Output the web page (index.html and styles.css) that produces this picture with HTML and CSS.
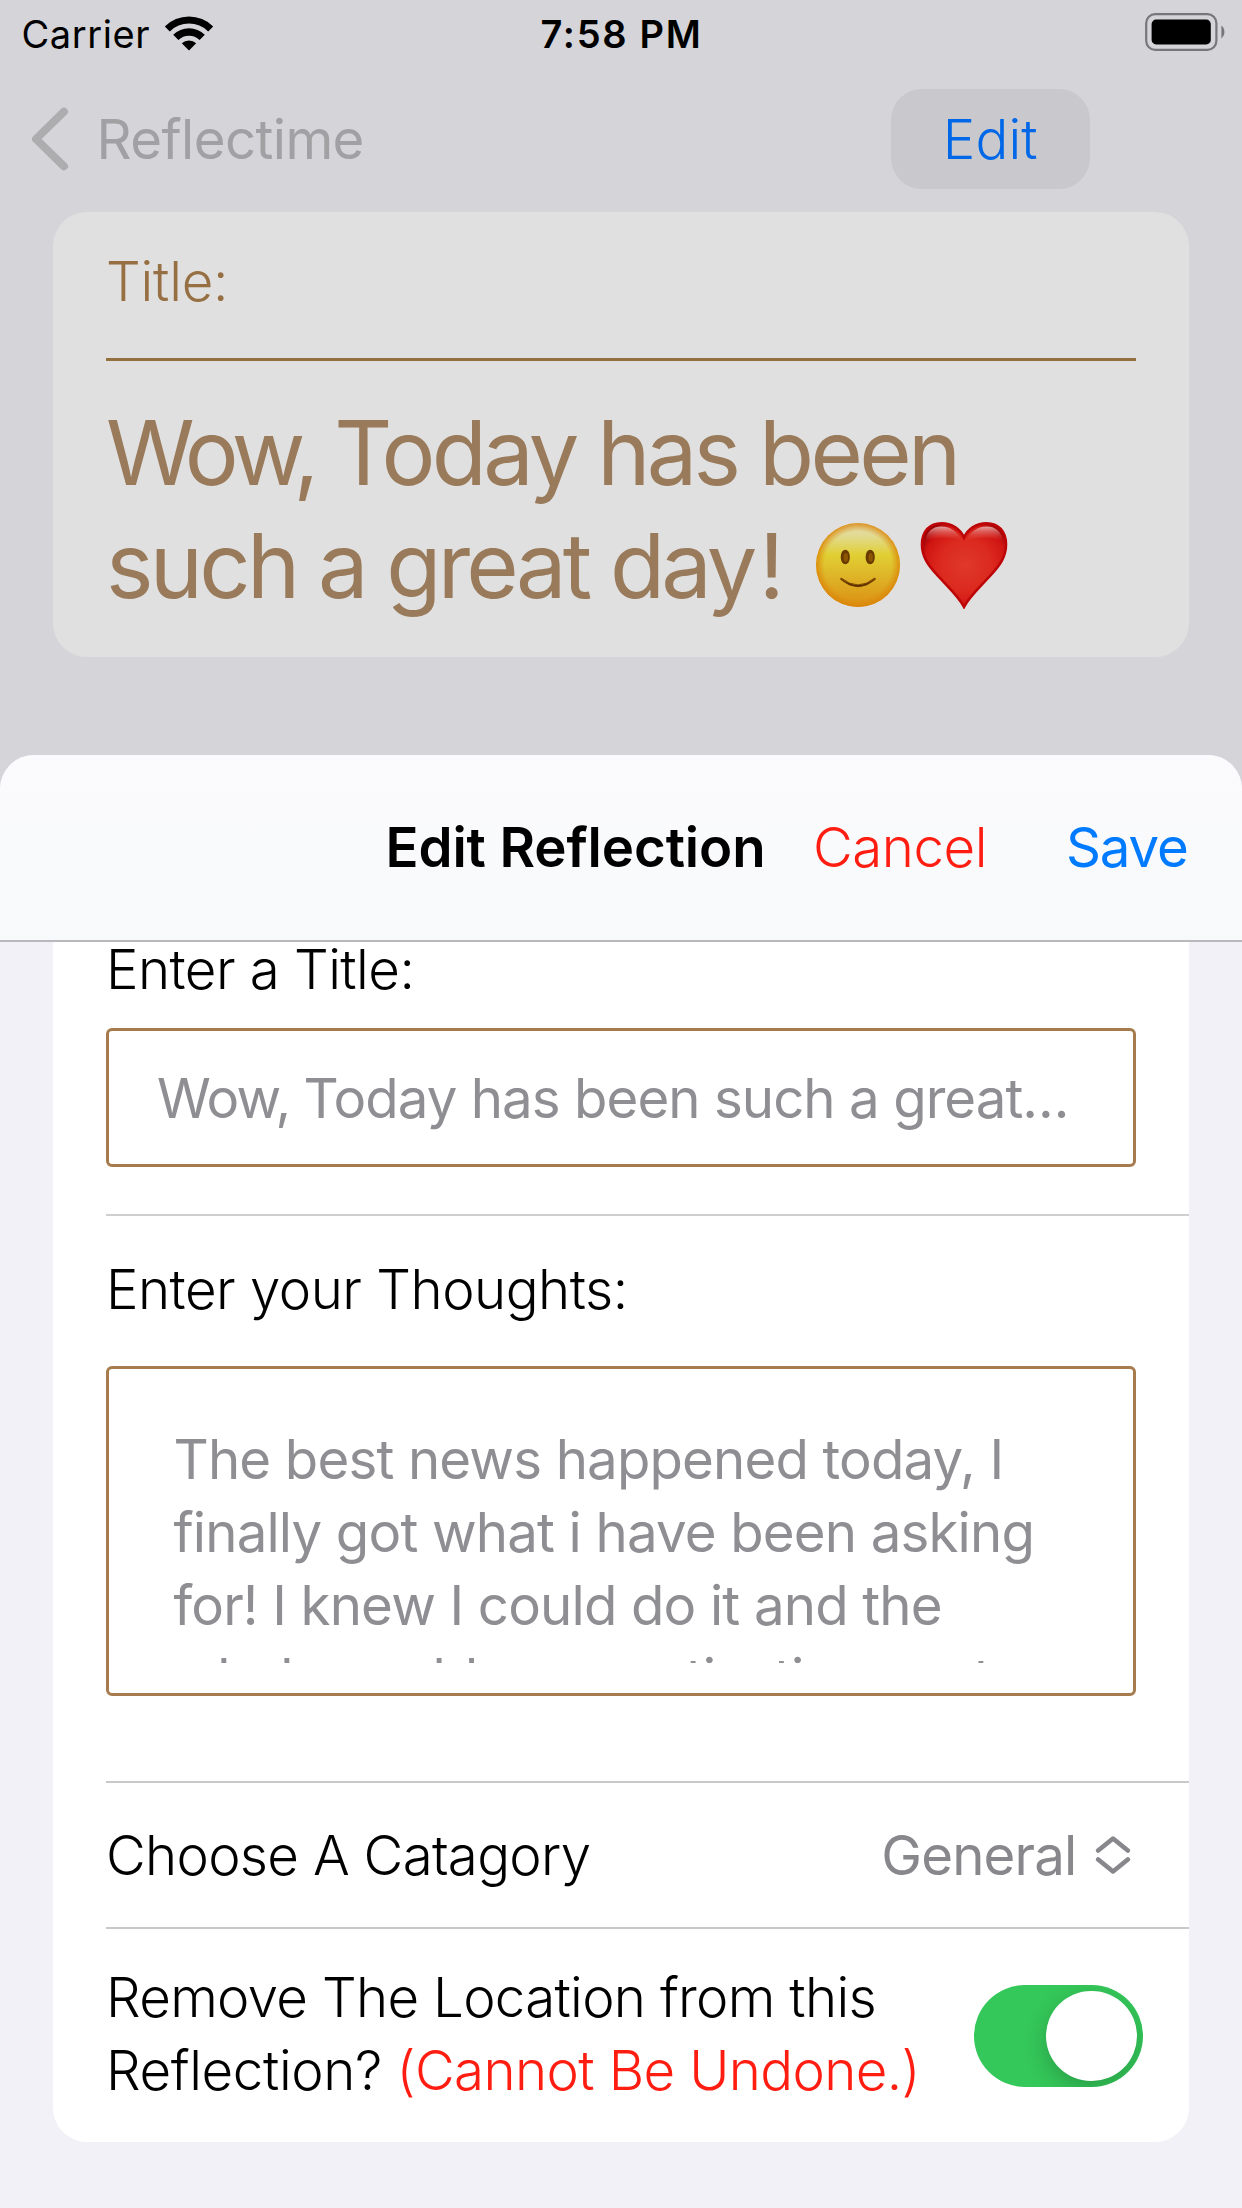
FILE: index.html
```html
<!DOCTYPE html>
<html lang="en">
<head>
<meta charset="utf-8">
<title>Reflectime</title>
<link rel="stylesheet" href="styles.css">
</head>
<body>
<section class="backdrop">
  <div class="status">
    <div class="status-left">
      <span class="carrier">Carrier</span>
      <svg class="wifi" width="50" height="38" viewBox="0 0 50 38">
        <path d="M0.8 12.4 A34.5 34.5 0 0 1 49.2 12.4 L44.2 17.4 A27.4 27.4 0 0 0 5.8 17.4 Z"/>
        <path d="M9.2 20.8 A22.6 22.6 0 0 1 40.8 20.8 L35.6 26 A15.2 15.2 0 0 0 14.4 26 Z"/>
        <path d="M17.8 29.3 A10.4 10.4 0 0 1 32.2 29.3 L25 36.6 Z"/>
      </svg>
    </div>
    <span class="clock">7:58 PM</span>
    <svg class="battery" width="80" height="38" viewBox="0 0 80 38">
      <rect x="1.2" y="1.2" width="70.2" height="35.6" rx="9" fill="none" stroke="#77767a" stroke-width="2.2"/>
      <rect x="6.6" y="6.6" width="59.2" height="24.8" rx="4.5" fill="#000"/>
      <path d="M76.4 12.6 Q79.4 15 79.4 19 Q79.4 23 76.4 25.4 Z" fill="#77767a"/>
    </svg>
  </div>
  <nav class="nav">
    <div class="back">
      <svg class="back-icon" width="38" height="64" viewBox="0 0 38 64"><path d="M33 4.7 L5 32 L33 59.3"/></svg>
      <span class="back-label">Reflectime</span>
    </div>
    <button class="edit">Edit</button>
  </nav>
  <article class="card">
    <div class="card-label">Title:</div>
    <h1 class="headline">
      <span class="line line-1"><span class="tight">Wow, </span>Today has been</span>
      <span class="line line-2">such a great day<span class="bang">!</span><svg class="smiley" width="86" height="86" viewBox="0 0 86 86">
        <defs>
          <linearGradient id="face" x1="0" y1="0" x2="0" y2="1">
            <stop offset="0" stop-color="#e2dcae"/><stop offset=".15" stop-color="#e2da92"/><stop offset=".38" stop-color="#e0cf33"/><stop offset=".62" stop-color="#deb628"/><stop offset="1" stop-color="#dc8f12"/>
          </linearGradient>
          <radialGradient id="faceEdge">
            <stop offset=".8" stop-color="#dc8a10" stop-opacity="0"/><stop offset="1" stop-color="#db8406" stop-opacity=".85"/>
          </radialGradient>
          <linearGradient id="mouth" x1="0" y1="0" x2="0" y2="1"><stop offset="0" stop-color="#8a5200"/><stop offset="1" stop-color="#4a2400"/></linearGradient>
        </defs>
        <circle cx="43" cy="43" r="42" fill="url(#face)"/>
        <circle cx="43" cy="43" r="42" fill="url(#faceEdge)"/>
        <ellipse cx="30.3" cy="35" rx="4.6" ry="7.3" fill="#693a00"/>
        <ellipse cx="55.2" cy="35" rx="4.6" ry="7.3" fill="#693a00"/>
        <ellipse cx="30.8" cy="35.5" rx="2.2" ry="4.4" fill="#8d5600"/>
        <ellipse cx="55.7" cy="35.5" rx="2.2" ry="4.4" fill="#8d5600"/>
        <path d="M26.2 56 Q43 69.800 59.8 56 Q60.8 56.400 60.2 57.600 Q43 72 25.8 57.600 Q25.2 56.400 26.2 56 Z" stroke="#693600" stroke-width=".8" fill="url(#mouth)"/>
      </svg><svg class="heart" width="88" height="88" viewBox="0 0 88 88">
        <defs>
          <radialGradient id="heartFill" cx=".52" cy=".5" r=".6">
            <stop offset="0" stop-color="#df382b"/><stop offset=".5" stop-color="#dc2a1f"/><stop offset=".82" stop-color="#d01512"/><stop offset="1" stop-color="#990206"/>
          </radialGradient>
          <linearGradient id="heartShine" x1="0" y1="0" x2="0" y2="1">
            <stop offset="0" stop-color="#ecc9c6" stop-opacity=".8"/><stop offset="1" stop-color="#e04a40" stop-opacity="0"/>
          </linearGradient>
        </defs>
        <path d="M44 86 C39 76 28 66 18 55 C8 44 2 36 2 23.5 C2 10.5 9.5 2.200 21.5 2.200 C31.5 2.200 40 7.5 44 16.5 C48 7.5 56.5 2.200 66.5 2.200 C78.500 2.200 86 10.500 86 23.500 C86 36 80 44 70 55 C60 66 49 76 44 86 Z" fill="url(#heartFill)" stroke="#bd0507" stroke-width="2.600"/>
        <path d="M5 20 C7 10 13 5.500 21.500 5.500 C31 5.500 38 11 42.500 20 C30 15 15 16 5 20 Z" fill="url(#heartShine)"/>
        <path d="M83 20 C81 10 75 5.500 66.500 5.500 C57 5.500 50 11 45.500 20 C58 15 73 16 83 20 Z" fill="url(#heartShine)"/>
      </svg></span>
    </h1>
  </article>
</section>

<main class="sheet">
  <header class="sheet-head">
    <h2 class="sheet-title">Edit Reflection</h2>
    <span class="cancel">Cancel</span>
    <span class="save">Save</span>
  </header>
  <div class="form">
    <section class="row row-title">
      <div class="label label-enter">Enter a Title:</div>
      <div class="field"><span class="tight-small">Wow, </span>Today has been such a great…</div>
    </section>
    <section class="row row-thoughts">
      <div class="label label-thoughts">Enter your Thoughts:</div>
      <div class="area">
        <div class="area-text">The best news happened today, I<br>finally got what i have been asking<br>for! I knew I could do it and the<br><span class="last">whole world was motivating me to</span></div>
      </div>
    </section>
    <section class="row row-category">
      <div class="label label-category">Choose A Catagory</div>
      <div class="picker">
        <span class="picker-value">General</span>
        <svg width="36" height="42" viewBox="0 0 36 42"><path d="M3.200 16.500 L18 4.500 L32.800 16.500 M3.200 25.500 L18 37.500 L32.800 25.500"/></svg>
      </div>
    </section>
    <section class="row row-location">
      <div class="location-text">Remove The Location from this<br><span class="question">Reflection?</span> <span class="warning">(Cannot Be Undone.)</span></div>
      <div class="toggle"><div class="knob"></div></div>
    </section>
  </div>
</main>
</body>
</html>
```
FILE: styles.css
```css
* { box-sizing: border-box; }

body {
  margin: 0;
  width: 1242px;
  height: 2208px;
  overflow: hidden;
  background: #d5d4d9;
  color: #000;
  font-family: Inter, "Liberation Sans", sans-serif;
  font-size: 54.6px;
  font-weight: 300;
  white-space: nowrap;
}

h1, h2 { margin: 0; font-size: inherit; font-weight: inherit; }

/* Dimmed screen behind the sheet */
.backdrop { height: 755px; }

.status {
  display: grid;
  grid-template-columns: 1fr auto 1fr;
  align-items: center;
  height: 68px;
  padding: 0 17.500px 0 21.500px;
  font-size: 38px;
}
.status-left { display: flex; align-items: center; gap: 14px; }
.carrier { font-weight: 400; letter-spacing: 0.6px; }
.wifi { margin-bottom: 2px; }
.clock { font-weight: 600; letter-spacing: 1.7px; margin-right: 3px; }
.battery { justify-self: end; margin-bottom: 4px; }

.nav {
  display: flex;
  align-items: center;
  justify-content: space-between;
  height: 142px;
  padding: 0 152.500px 0 30.500px;
}
.back { display: flex; align-items: center; gap: 28px; color: #a1a1a3; }
.back-icon { fill: none; stroke: #adadaf; stroke-width: 8; stroke-linecap: round; stroke-linejoin: round; }
.back-label { font-weight: 400; letter-spacing: -0.6px; }
.edit {
  width: 198.500px;
  height: 100px;
  padding: 0;
  border: 0;
  border-radius: 31px;
  background: #c9c8cd;
  color: #0068e8;
  font: inherit;
  letter-spacing: 0.1px;
}

.card {
  height: 445px;
  margin: 2px 53px 0;
  padding: 0 53px;
  border-radius: 34px;
  background: #e0e0e0;
  color: #997a5a;
}
.card-label {
  height: 149px;
  line-height: 139px;
  border-bottom: 3px solid #94703f;
  color: #966f42;
  letter-spacing: -0.2px;
}
.headline { padding-top: 35px; font-size: 90px; font-weight: 400; line-height: 113px; }
.line { display: block; height: 113px; }
.line-1 { letter-spacing: -3.700px; }
.line-2 { letter-spacing: -3.750px; }
.tight { letter-spacing: -5.300px; }
.bang { margin-left: 5px; }
.smiley { margin-left: 34px; vertical-align: -9.500px; }
.heart { margin-left: 19.500px; vertical-align: -11px; }

/* Edit sheet */
.sheet {
  height: 1453px;
  overflow: hidden;
  border-radius: 34px 34px 0 0;
  background: #f2f1f7;
}
.sheet-head {
  display: grid;
  grid-template-columns: 427.500px 253px 1fr;
  align-items: center;
  height: 187px;
  padding: 0 0 2px 385.500px;
  border-bottom: 2px solid #b9b9bb;
  background: linear-gradient(#fbfbfd, #f8f9fb);
}
.sheet-title { font-weight: 600; letter-spacing: -0.1px; }
.cancel { color: #ff1d12; letter-spacing: -0.44px; }
.save { color: #007aff; font-weight: 400; letter-spacing: -1.2px; }

.form {
  height: 1200px;
  margin: 0 53px;
  border-radius: 0 0 34px 34px;
  background: #fff;
}
.row { margin-left: 53px; padding-right: 53px; border-bottom: 2px solid #c9c9cb; }
.row-title { height: 274px; border-bottom-color: #cfcfd1; }
.label-enter { line-height: 54px; letter-spacing: -0.55px; }
.field {
  height: 139px;
  margin-top: 32px;
  padding-left: 48px;
  border: 3px solid #a67c4e;
  border-radius: 6px;
  color: #8e8e93;
  font-weight: 400;
  line-height: 134px;
  letter-spacing: -0.96px;
}
.tight-small { letter-spacing: -1.600px; }

.row-thoughts { height: 567px; }
.label-thoughts { line-height: 146px; letter-spacing: -0.5px; }
.area {
  height: 330px;
  margin-top: 4px;
  padding: 54px 0 0 64.500px;
  border: 3px solid #a67c4e;
  border-radius: 6px;
}
.area-text {
  height: 240px;
  overflow: hidden;
  color: #8e8e93;
  font-weight: 400;
  line-height: 73px;
  letter-spacing: -0.84px;
}
.last { letter-spacing: -0.98px; }

.row-category { display: flex; align-items: center; justify-content: space-between; height: 146px; }
.label-category { letter-spacing: -0.7px; }
.picker { display: flex; align-items: center; gap: 18px; padding-right: 5.500px; color: #87878c; }
.picker-value { font-weight: 400; letter-spacing: -0.83px; }
.picker svg { fill: none; stroke: #87878c; stroke-width: 4.600; stroke-linecap: round; stroke-linejoin: round; }

.row-location {
  display: flex;
  align-items: center;
  justify-content: space-between;
  height: 213px;
  padding-right: 46.500px;
  border: 0;
}
.location-text { line-height: 73.300px; margin-bottom: 2.500px; letter-spacing: -0.69px; }
.question { letter-spacing: -0.38px; }
.warning { color: #ff1d12; letter-spacing: -0.62px; }
.toggle {
  display: flex;
  align-items: center;
  justify-content: flex-end;
  width: 169px;
  height: 102.500px;
  margin-top: 1px;
  padding-right: 6px;
  overflow: hidden;
  border-radius: 52px;
  background: #34c759;
}
.knob {
  width: 90.500px;
  height: 90.500px;
  border-radius: 50%;
  background: #fff;
  box-shadow: 0 8px 22px rgba(0, 0, 0, 0.2);
}
```
